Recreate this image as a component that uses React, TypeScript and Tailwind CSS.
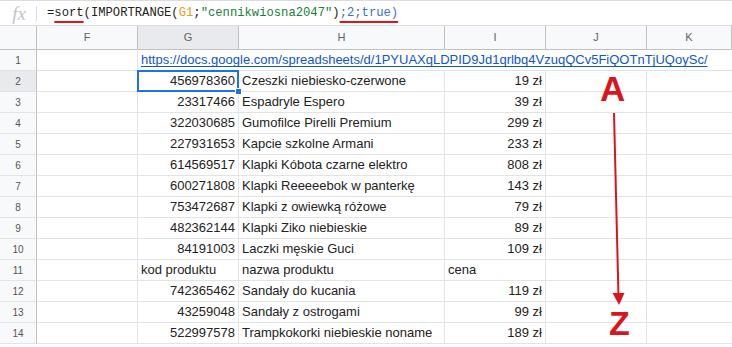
import React from 'react'

const cols = 'grid grid-cols-[37px_101px_101px_206px_101px_101px_1fr]'

const rows: { id: string; name: string; price: string }[] = [
  { id: '456978360', name: 'Czeszki niebiesko-czerwone', price: '19 zł' },
  { id: '23317466', name: 'Espadryle Espero', price: '39 zł' },
  { id: '322030685', name: 'Gumofilce Pirelli Premium', price: '299 zł' },
  { id: '227931653', name: 'Kapcie szkolne Armani', price: '233 zł' },
  { id: '614569517', name: 'Klapki Kóbota czarne elektro', price: '808 zł' },
  { id: '600271808', name: 'Klapki Reeeeebok w panterkę', price: '143 zł' },
  { id: '753472687', name: 'Klapki z owiewką różowe', price: '79 zł' },
  { id: '482362144', name: 'Klapki Ziko niebieskie', price: '89 zł' },
  { id: '84191003', name: 'Laczki męskie Guci', price: '109 zł' },
  { id: 'kod produktu', name: 'nazwa produktu', price: 'cena' },
  { id: '742365462', name: 'Sandały do kucania', price: '119 zł' },
  { id: '43259048', name: 'Sandały z ostrogami', price: '99 zł' },
  { id: '522997578', name: 'Trampkokorki niebieskie noname', price: '189 zł' },
]

const cellBase = 'h-[21px] border-b border-r border-[#e2e3e3] px-[3px] flex items-center whitespace-nowrap'
const cell = cellBase + ' overflow-hidden'

function RowNum({ n, active }: { n: number; active?: boolean }) {
  return (
    <div
      className={
        'h-[21px] flex items-center justify-center border-b border-r border-b-[#e2e3e3] border-r-[#c0c0c0] text-[10px] text-[#555] ' +
        (active ? 'bg-[#e8eaed]' : 'bg-[#f8f9fa]')
      }
    >
      {n}
    </div>
  )
}

export default function App() {
  const headers = ['F', 'G', 'H', 'I', 'J', 'K']

  return (
    <div className="relative h-[347px] w-[732px] overflow-hidden bg-white font-['Liberation_Sans',Arial,sans-serif] text-[13px] text-[#222]">
      {/* formula bar */}
      <div className="flex h-[26px] items-center border-y border-[#dadce0] bg-white">
        <div className="flex w-[36px] items-center justify-center">
          <span className="pl-[2px] font-['Liberation_Serif',serif] text-[19px] italic leading-none text-[#c4c4c4]">fx</span>
        </div>
        <div className="h-[15px] w-px bg-[#dadce0]" />
        <div className="pl-[10px] font-['Liberation_Mono',monospace] text-[12.2px] leading-none text-[#222]">
          <span>=</span>
          <span className="underline decoration-[#e0151b] decoration-2 underline-offset-[5px]">sort</span>
          <span>(IMPORTRANGE(</span>
          <span className="text-[#f09a26]">G1</span>
          <span>;</span>
          <span className="text-[#188038]">"cennikwiosna2047"</span>
          <span>)</span>
          <span className="text-[#3b6fd4] underline decoration-[#e0151b] decoration-2 underline-offset-[5px]">;2;true)</span>
        </div>
      </div>

      {/* column headers */}
      <div className={cols + ' h-[24px] bg-[#f8f9fa]'}>
        <div className="border-b border-r border-[#c0c0c0]" />
        {headers.map((h) => (
          <div
            key={h}
            className={
              'flex items-center justify-center border-b border-r border-[#c0c0c0] text-[11px] text-[#5f6368] ' +
              (h === 'G' ? 'bg-[#e8eaed]' : '')
            }
          >
            {h}
          </div>
        ))}
      </div>

      {/* row 1 */}
      <div className={cols}>
        <RowNum n={1} />
        <div className={cell} />
        <div className={cell + ' col-span-5 border-r-0'}>
          <span className="text-[#1155cc] underline underline-offset-[2px]">
            https://docs.google.com/spreadsheets/d/1PYUAXqLDPID9Jd1qrlbq4VzuqQCv5FiQOTnTjUQoySc/
          </span>
        </div>
      </div>

      {rows.map((r, i) => {
        const n = i + 2
        const label = n === 11
        return (
          <div key={n} className={cols}>
            <RowNum n={n} active={n === 2} />
            <div className={cell} />
            <div className={(n === 2 ? cellBase + ' relative z-10' : cell) + ' ' + (label ? 'justify-start' : 'justify-end')}>
              {r.id}
              {n === 2 && (
                <>
                  <div className="pointer-events-none absolute -left-px -top-px bottom-[-1px] right-[-1px] border-2 border-[#1a73e8]" />
                  <div className="absolute bottom-[-4px] right-[-4px] h-[7px] w-[7px] border border-white bg-[#1a73e8]" />
                </>
              )}
            </div>
            <div className={cell}>{r.name}</div>
            <div className={cell + ' ' + (label ? 'justify-start' : 'justify-end')}>{r.price}</div>
            <div className={cell} />
            <div className={cell + ' border-r-0'} />
          </div>
        )
      })}

      {/* red A → Z annotation */}
      <span className="absolute left-[600px] top-[71px] text-[35px] font-bold leading-none text-[#d9161d]">A</span>
      <svg className="absolute left-0 top-0" width="732" height="347" viewBox="0 0 732 347">
        <line x1="614" y1="113" x2="618.5" y2="297" stroke="#d9161d" strokeWidth="2" />
        <polygon points="612.5,293 624.5,293 619,305" fill="#d9161d" />
      </svg>
      <span className="absolute left-[609px] top-[306px] text-[34px] font-bold leading-none text-[#d9161d]">Z</span>
    </div>
  )
}
